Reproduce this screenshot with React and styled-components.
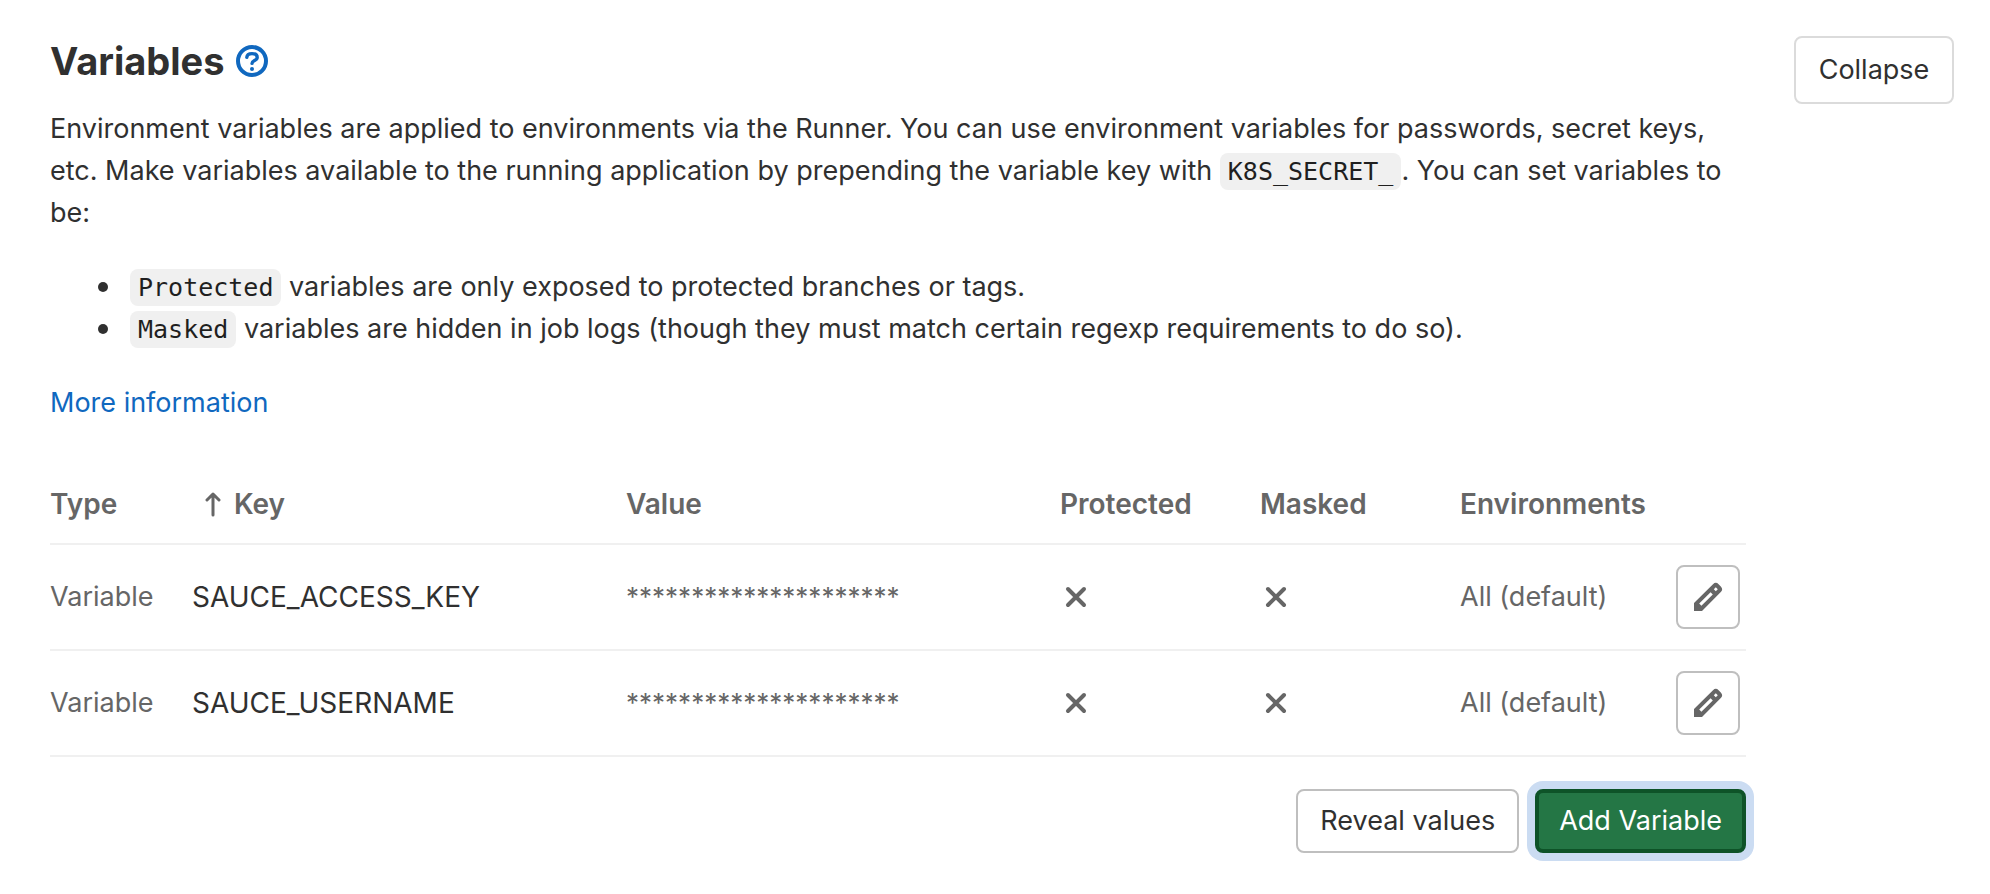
import React from 'react';
import styled, { createGlobalStyle } from 'styled-components';

const GlobalStyle = createGlobalStyle`
  *, *::before, *::after {
    box-sizing: border-box;
  }
  body {
    margin: 0;
    background: #fff;
    color: #303030;
    font-family: Inter, "Liberation Sans", sans-serif;
    font-size: 27px;
    line-height: 42px;
  }
`;

const Section = styled.section`
  display: flex;
  align-items: flex-start;
  gap: 48px;
  padding: 36px 36px 36px 50px;
`;

const Content = styled.div`
  flex: 1;
  min-width: 0;
`;

const Title = styled.h4`
  display: flex;
  align-items: center;
  gap: 12px;
  margin: 0 0 22px;
  font-size: 38px;
  font-weight: 700;
  line-height: 50px;
`;

const Link = styled.a`
  color: #1068bf;
  text-decoration: none;
`;

const HelpLink = styled(Link)`
  display: flex;
`;

const Paragraph = styled.p`
  margin: 0 0 32px;
`;

const List = styled.ul`
  margin: 0 0 32px;
  padding-left: 80px;
  list-style: none;
`;

const ListItem = styled.li`
  &::before {
    content: '';
    display: inline-block;
    width: 10px;
    height: 10px;
    margin: 0 22px 4px -32px;
    border-radius: 50%;
    background: currentColor;
  }
`;

const Code = styled.code`
  padding: 4px 8px;
  border-radius: 8px;
  background: #f0f0f0;
  color: #1f1f1f;
  font-family: "DejaVu Sans Mono", monospace;
  font-size: 25px;
  line-height: 1;
`;

const Table = styled.table`
  width: 100%;
  margin: 43px 0 32px;
  border-collapse: separate;
  border-spacing: 0;
  table-layout: fixed;
  color: #666;
`;

const HeadCell = styled.th`
  width: ${({ $width }) => $width || 'auto'};
  padding: 16px 0 18px;
  border-bottom: 2px solid #f0f0f0;
  font-size: 28px;
  font-weight: 600;
  text-align: left;
`;

const SortLabel = styled.span`
  display: flex;
  align-items: center;
  gap: 8px;
  padding-left: 8px;
`;

const Cell = styled.td`
  padding: 20px 0;
  border-bottom: 2px solid #f0f0f0;

  svg {
    display: block;
  }
`;

const KeyCell = styled(Cell)`
  color: #303030;
  font-size: 28px;
`;

const ValueCell = styled(Cell)`
  font-size: 26px;
`;

const Button = styled.button`
  padding: 9px 22px;
  border: 2px solid #bfbfbf;
  border-radius: 8px;
  background: #fff;
  color: #303030;
  font: inherit;
  white-space: nowrap;
`;

const CollapseButton = styled(Button)`
  min-width: 160px;
  padding: 11px 22px;
  border-color: #dbdbdb;
`;

const ConfirmButton = styled(Button)`
  padding: 7px 20px;
  border: 4px solid #0e5328;
  background: #247645;
  color: #fff;
  box-shadow: 0 0 0 8px #cbdcf2;
`;

const IconButton = styled(Button)`
  display: block;
  padding: 14px;
  color: #666;
`;

const Actions = styled.div`
  display: flex;
  justify-content: flex-end;
  gap: 16px;
`;

const QuestionIcon = () => (
  <svg width="32" height="32" viewBox="0 0 16 16" fill="none" stroke="currentColor" aria-hidden="true">
    <circle cx="8" cy="8" r="7" strokeWidth="2" />
    <path d="M5.4 6.2C5.5 5 6.500 4.300 8 4.300s2.600.7 2.600 1.900c0 1.600-2.600 1.500-2.600 3" strokeWidth="1.700" strokeLinecap="round" />
    <circle cx="8" cy="12" r="1" fill="currentColor" stroke="none" />
  </svg>
);

const SortIcon = () => (
  <svg width="26" height="28" viewBox="0 0 26 28" fill="none" stroke="currentColor" aria-hidden="true">
    <path d="M13 25V4M7 10l6-6 6 6" strokeWidth="3" strokeLinecap="round" strokeLinejoin="round" />
  </svg>
);

const CloseIcon = () => (
  <svg width="32" height="32" viewBox="0 0 16 16" fill="none" stroke="currentColor" aria-hidden="true">
    <path d="m4 4 8 8M12 4l-8 8" strokeWidth="2" strokeLinecap="round" />
  </svg>
);

const PencilIcon = () => (
  <svg width="32" height="32" viewBox="0 0 16 16" fill="currentColor" aria-hidden="true">
    <path
      fillRule="evenodd"
      d="M1 15v-4L10.500 1.600a2 2 0 0 1 2.800 0l1.100 1.100a2 2 0 0 1 0 2.800L5 15zM3.600 11.300l1.100 1.100 5.700-5.700-1.100-1.100zM10.900 4.100l1 1 1-1-1-1z"
    />
  </svg>
);

const variables = [
  { key: 'SAUCE_ACCESS_KEY', environments: 'All (default)' },
  { key: 'SAUCE_USERNAME', environments: 'All (default)' },
];

const VariableTable = () => (
  <Table>
    <thead>
      <tr>
        <HeadCell $width="142px">Type</HeadCell>
        <HeadCell aria-sort="ascending">
          <SortLabel><SortIcon />Key</SortLabel>
        </HeadCell>
        <HeadCell>Value</HeadCell>
        <HeadCell $width="200px">Protected</HeadCell>
        <HeadCell $width="200px">Masked</HeadCell>
        <HeadCell $width="216px">Environments</HeadCell>
        <HeadCell $width="70px" aria-label="Actions" />
      </tr>
    </thead>
    <tbody>
      {variables.map(variable => (
        <tr key={variable.key}>
          <Cell>Variable</Cell>
          <KeyCell>{variable.key}</KeyCell>
          <ValueCell>{'*'.repeat(21)}</ValueCell>
          <Cell><CloseIcon /></Cell>
          <Cell><CloseIcon /></Cell>
          <Cell>{variable.environments}</Cell>
          <Cell>
            <IconButton type="button" aria-label="Edit"><PencilIcon /></IconButton>
          </Cell>
        </tr>
      ))}
    </tbody>
  </Table>
);

const App = () => {
  return (
    <>
      <GlobalStyle />
      <Section>
        <Content>
          <Title>
            Variables
            <HelpLink href="#help" aria-label="Help"><QuestionIcon /></HelpLink>
          </Title>
          <Paragraph>
            Environment variables are applied to environments via the Runner. You can use environment
            variables for passwords, secret keys, etc. Make variables available to the running
            application by prepending the variable key with <Code>K8S_SECRET_</Code>. You can set
            variables to be:
          </Paragraph>
          <List>
            <ListItem><Code>Protected</Code> variables are only exposed to protected branches or tags.</ListItem>
            <ListItem><Code>Masked</Code> variables are hidden in job logs (though they must match certain regexp requirements to do so).</ListItem>
          </List>
          <Link href="#more">More information</Link>
          <VariableTable />
          <Actions>
            <Button type="button">Reveal values</Button>
            <ConfirmButton type="button">Add Variable</ConfirmButton>
          </Actions>
        </Content>
        <CollapseButton type="button">Collapse</CollapseButton>
      </Section>
    </>
  );
};

export default App;
